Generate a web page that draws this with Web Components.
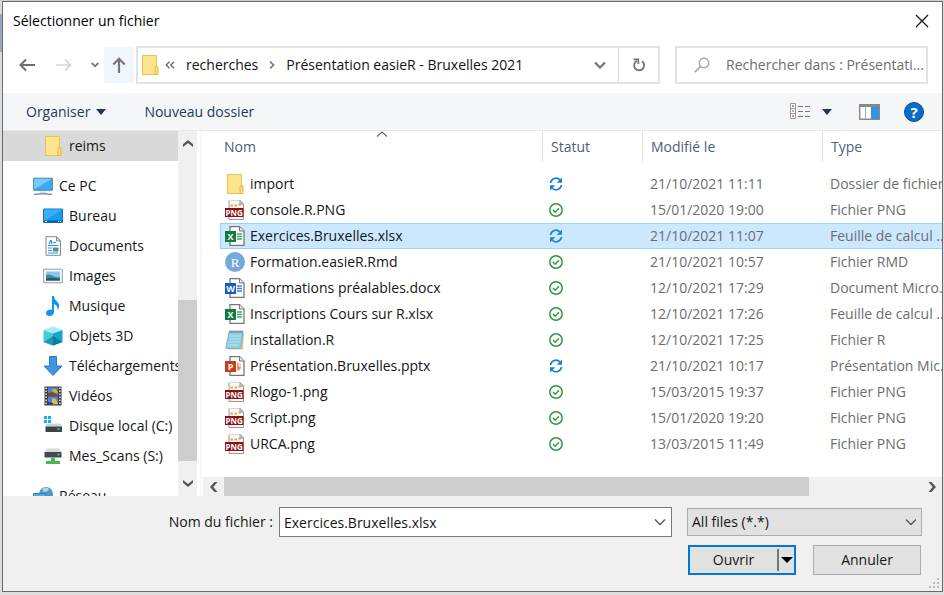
<!DOCTYPE html>
<html lang="fr">
<head>
<meta charset="utf-8">
<title>Sélectionner un fichier</title>
<style>
html, body { margin: 0; height: 100%; }
body {
  box-sizing: border-box;
  padding: 1px 1px 3px 2px;
  background: linear-gradient(#9aa9c0, #9aa9c0) 0 14px / 2px 38px no-repeat, linear-gradient(#cfcfcf, #cfcfcf) 0 0 / 100% 1px no-repeat, #dcdcdc;
  font: 14px/20px "Open Sans", "Noto Sans", sans-serif;
  color: #161616;
}
</style>
</head>
<body>
<file-dialog></file-dialog>
<script>
const ICONS = {
  close: ['0 0 14 14', '<path d="M1 1l12 12M13 1L1 13" stroke="#111" stroke-width="1.2" fill="none"/>'],
  back: ['0 0 16 14', '<path d="M7 1.5L1.5 7 7 12.500M2 7h14" stroke="#6e6e6e" stroke-width="2" fill="none"/>'],
  forward: ['0 0 16 14', '<path d="M9 1.500L14.500 7 9 12.500M14 7H0" stroke="#d6d6d6" stroke-width="1.700" fill="none"/>'],
  up: ['0 0 14 16', '<path d="M1.300 7.500L7 1.800l5.700 5.700M7 2v14" stroke="#777" stroke-width="2.200" fill="none"/>'],
  small: ['0 0 8 6', '<path d="M.7 1L4 4.300 7.300 1" stroke="#777" stroke-width="1.800" fill="none"/>'],
  down: ['0 0 12 8', '<path d="M1 1.500l5 5 5-5" stroke="#777" stroke-width="2.200" fill="none"/>'],
  thin: ['0 0 12 8', '<path d="M1 1.500l5 5 5-5" stroke="#555" stroke-width="1.300" fill="none"/>'],
  sort: ['0 0 12 6', '<path d="M1 5.500l5-4.500 5 4.500" stroke="#666" stroke-width="1.300" fill="none"/>'],
  sup: ['0 0 10 8', '<path d="M0 7V4.200L5 0l5 4.200V7L5 3z" fill="#555"/>'],
  sdown: ['0 0 10 8', '<path d="M0 1v2.800L5 8l5-4.200V1L5 5z" fill="#555"/>'],
  sleft: ['0 0 8 10', '<path d="M7.500 0H4.500L0 5l4.500 5h3L3.300 5z" fill="#555"/>'],
  sright: ['0 0 8 10', '<path d="M.5 0h3L8 5l-4.500 5h-3L4.700 5z" fill="#555"/>'],
  guill: ['0 0 10 8', '<path d="M4.500 .7L1.200 4l3.300 3.300M9 .7L5.700 4 9 7.300" stroke="#666" stroke-width="1.300" fill="none"/>'],
  crumb: ['0 0 6 8', '<path d="M1 .7L4.500 4 1 7.300" stroke="#777" stroke-width="1.600" fill="none"/>'],
  refresh: ['0 0 14 14', '<path d="M9.200 2.900A5 5 0 1 1 4 3.200" stroke="#777" stroke-width="1.900" fill="none" transform="matrix(-1 0 0 1 14 0)"/><path d="M1.500 1.300H6.300V6" stroke="#777" stroke-width="1.800" fill="none"/>'],
  search: ['0 0 16 16', '<circle cx="10" cy="6" r="4.800" stroke="#999" stroke-width="1.200" fill="none"/><path d="M6.500 9.500L.7 15.300" stroke="#999" stroke-width="1.400"/>'],
  tri: ['0 0 10 6', '<path d="M0 0h10L5 6z" fill="#1e395b"/>'],
  btri: ['0 0 12 6', '<path d="M0 0h12L6 6z" fill="#000"/>'],
  views: ['0 0 21 17', '<path d="M.5 .5h5v5h-5zM.5 5.500h5v5h-5zM.5 10.500h5v5h-5z" fill="#fff" stroke="#999"/><path d="M2.300 2.300h1.500v1.500H2.300z" fill="#555"/><path d="M2.300 7.300h1.500v1.500H2.300z" fill="#2b7de0"/><path d="M2.300 12.300h1.500v1.500H2.300z" fill="#d33"/><path d="M8 3.500h5m2 0h5M8 8.500h5m2 0h5M8 13.500h5m2 0h5" stroke="#777"/>'],
  pane: ['0 0 21 16', '<path d="M.7 .7h19.600v14.600H.7z" fill="#fff" stroke="#888" stroke-width="1.400"/><path d="M0 0h21v3H0z" fill="#888"/><path d="M6.500 3v12" stroke="#aaa"/><path d="M12 3h8v12h-8z" fill="#3596e0"/>'],
  help: ['0 0 20 20', '<circle cx="10" cy="10" r="9.500" fill="#0b6bcb" stroke="#084f9c"/><text x="10" y="15.500" text-anchor="middle" font-size="15" font-weight="700" fill="#fff">?</text>'],
  folder: ['0 0 20 20', '<path d="M2.500 .5h14v19h-14z" fill="#ffe48f" stroke="#eac251"/><path d="M15 12.500q0-1 1.500-1t1.500 1v7h-3z" fill="#ffdc75" stroke="#e5b83d"/>'],
  pc: ['0 0 20 20', '<path d="M.7 2.200h18.600v12H.7z" fill="#3aabf5" stroke="#4a7f9e"/><path d="M1.200 2.700h17.600L1.200 13.500z" fill="#76cbff"/><path d="M7.500 15.200h5l1 2h-7z" fill="#d5dde4"/><path d="M1 18.500q9-1.500 18 0" stroke="#7893a8" stroke-width="1.500" fill="none"/>'],
  desktop: ['0 0 20 20', '<path d="M.5 3h19v13.500H.5z" fill="#189cf4" stroke="#1673b3"/><path d="M1 3.500h18L3 14H1z" fill="#3cadff"/><path d="M1 14.500h18v2H1z" fill="#0b5d9b"/><path d="M2 15.500h2m11 0h1m1 0h1" stroke="#fff"/>'],
  docs: ['0 0 20 20', '<path d="M3 .7h10.500L17.500 5v14.300H3z" fill="#fff" stroke="#888"/><path d="M13.500 .7V5h4z" fill="#ddd" stroke="#888"/><path d="M8 4l-2 4M8 4l1 4M10 6.500h3M5 9.500h10.500M5 12h4M5 14.500h4M5 17h10" stroke="#2795e8" stroke-width="1.200" fill="none"/><path d="M10 11.500h5.500v4H10z" fill="#598a8c"/>'],
  images: ['0 0 20 20', '<path d="M.7 3.200h18.600v13.600H.7z" fill="#fafafa" stroke="#999"/><path d="M3 5.500h14v9H3z" fill="#8bc4f1"/><path d="M3 9q4-1 7 1t7 1v3.500H3z" fill="#4a8b7e"/><path d="M3 12.500q7-1 14 .5v1.500H3z" fill="#21567d"/>'],
  music: ['0 0 20 20', '<path d="M9 0h2q0 3 2.500 5t2.700 4.500q0 3-1.700 5 .7-5-3.500-6.500v8q-.4 3.700-4.500 4-3.300 0-3.500-2.700.2-3.300 4-3.700 1.200 0 2 .5z" fill="#0d95f2"/>'],
  cube: ['0 0 20 20', '<path d="M10 .5L19.500 4 10 7.500.5 4z" fill="#a2edf3"/><path d="M.5 4L10 7.500v12L.5 16z" fill="#45cbd7"/><path d="M19.500 4L10 7.500v12l9.500-3.500z" fill="#11a9cd"/><path d="M.5 16L10 10v9.500z" fill="#1b9bae"/><path d="M10 10l9.500 6L10 19.500z" fill="#087aa7"/>'],
  download: ['0 0 20 20', '<path d="M6.500 .5h7V10H19l-9 9.500L1 10h5.500z" fill="#3e95e3" stroke="#2a79c5"/>'],
  video: ['0 0 20 20', '<path d="M1.500 .5h17v19h-17z" fill="#3e3e3e"/><path d="M3.200 1.500v17M16.800 1.500v17" stroke="#ddd" stroke-width="1.600" stroke-dasharray="1.500 1.500"/><path d="M5 1.500h10v8H5zM5 10.500h10v8H5z" fill="#4e83dc"/><path d="M9 3h4l2 4-5 1z" fill="#d8a92e"/><path d="M5 7l5-1 5 3v.5H5z" fill="#7d4a28"/><path d="M9 12l4 1 2 5H9z" fill="#e4bb3c"/><path d="M5 16l5 1v1.500H5z" fill="#263b86"/>'],
  disk: ['0 0 20 20', '<path d="M1 0h3v3H1zM5 0h3v3H5zM1 4h3v3H1zM5 4h3v3H5z" fill="#17afea"/><path d="M4 7.500h13l2 3H2.500z" fill="#cfd3d5"/><path d="M2.500 10.500H19v5.500H2.500z" fill="#3c4245"/><path d="M14.500 13h2" stroke="#45e861" stroke-width="1.600"/>'],
  net: ['0 0 20 20', '<path d="M4 2.500h12l2.500 3.500h-17z" fill="#d7d9da"/><path d="M1.500 6h17v5.500h-17z" fill="#42484b"/><path d="M14.500 8.500h2" stroke="#45e861" stroke-width="1.600"/><path d="M8 12h4v3h5v3H3v-3h5z" fill="#49b851"/>'],
  globe: ['0 0 20 20', '<circle cx="13" cy="8" r="7" fill="#4a9ac5"/><path d="M9 3q4-3 7 0-1 3-5 3z" fill="#a7d9ec"/><path d="M.5 7.500h12v8H.5z" fill="#45b1f0" stroke="#3a7ca5"/>'],
  png: ['0 0 20 20', '<path d="M4 .5h11L18.500 4v15.500H4z" fill="#f7f7ff" stroke="#999"/><path d="M4 .5h11" stroke="#d5d5f5"/><path d="M15 .5V4h3.500z" fill="#ddd" stroke="#999"/><path d="M5.500 5.500h2.500m1.500 0H12m1.500-1H16" stroke="#f5a623" stroke-width="2.200"/><path d="M0 8h18.500v9H0z" fill="#8a1212"/><text x="9.200" y="15.500" text-anchor="middle" font-size="8" font-weight="700" fill="#fff">PNG</text>'],
  r: ['0 0 20 20', '<circle cx="10" cy="10" r="10" fill="#75a9dc"/><text x="10" y="14.500" text-anchor="middle" font-family="Liberation Serif, serif" font-size="13" fill="#fff">R</text>'],
  notes: ['0 0 20 20', '<path d="M5 2.500h14l-1 17H3z" fill="#d9c79b"/><path d="M4 2h14l-2.500 16.500H.7z" fill="#8fcfe2" stroke="#6ba6bb" stroke-width=".7"/><path d="M5 6h11M4.500 9h11M4 12h11M3 15h11" stroke="#b9e3f0"/><path d="M4.500 1.500h14" stroke="#555" stroke-width="2" stroke-dasharray="1 1"/>'],
  sync: ['0 0 14 14', '<path d="M1.500 6A5.500 5.500 0 0 1 11 3M12.500 8A5.500 5.500 0 0 1 3 11" stroke="#1782d8" stroke-width="1.700" fill="none"/><path d="M13 .5v5.300H7.700zM1 13.500V8.200h5.300z" fill="#1782d8"/>'],
  ok: ['0 0 14 14', '<circle cx="7" cy="7" r="6.200" stroke="#2f9a41" stroke-width="1.500" fill="none"/><path d="M4 7l2.200 2.200L10 5.300" stroke="#2f9a41" stroke-width="1.500" fill="none"/>'],
  grip: ['0 0 11 11', '<path d="M8 0h2v2H8zM4 4h2v2H4zM8 4h2v2H8zM0 8h2v2H0zM4 8h2v2H4zM8 8h2v2H8z" fill="#bbb"/>']
};
const office = (color, letter, lines) => ['0 0 20 20',
  `<path d="M5 .7h9.500L19 5v14.300H5z" fill="#fff" stroke="#777" stroke-width="1.300"/><path d="M14.500 .7V5H19" fill="#eee" stroke="#777"/>${lines}<path d="M0 5h11v11H0z" fill="${color}"/><text x="5.500" y="13.700" text-anchor="middle" font-size="9" font-weight="700" fill="#fff">${letter}</text>`];
ICONS.xls = office('#107c41', 'X', '<path d="M12 8h5M12 10.500h5M12 13h5" stroke="#38a969" stroke-width="1.500"/>');
ICONS.doc = office('#185abd', 'W', '<path d="M12 8h5M12 10.500h5M12 13h5" stroke="#3a83dd" stroke-width="1.500"/>');
ICONS.ppt = office('#c43e1c', 'P', '<path d="M12 6.500a4 4 0 1 1 0 8z" fill="#f08a68"/><path d="M14 6v4h3" stroke="#fff" fill="none"/>');

const define = (name, html, setup) => customElements.define(name, class extends HTMLElement {
  constructor() {
    super();
    const t = document.createElement('template');
    t.innerHTML = html;
    this.attachShadow({ mode: 'open' }).append(t.content.cloneNode(true));
  }
  connectedCallback() { if (setup) setup.call(this, this.shadowRoot); }
});
const RESET = 'button,input,select{font:inherit;color:inherit;border:0;background:none;padding:0;margin:0;border-radius:0;outline:0;min-width:0}button{display:flex;align-items:center;justify-content:center}:host,*{box-sizing:border-box}';

define('ui-icon', '<style>:host{display:block;flex:none;font-family:"Open Sans",sans-serif}svg{display:block}</style>', function (root) {
  const [box, body] = ICONS[this.getAttribute('name')];
  const [, , w, h] = box.split(' ');
  const holder = document.createElement('template');
  holder.innerHTML = `<svg width="${w}" height="${h}" viewBox="${box}" aria-hidden="true">${body}</svg>`;
  root.append(holder.content);
});

define('title-bar', `<style>${RESET}
:host{display:flex;justify-content:space-between;align-items:center;height:38px;padding:0 13px 0 10px;color:#000}
button{width:14px;height:14px}</style>
<slot></slot><button aria-label="Fermer"><ui-icon name="close"></ui-icon></button>`);

define('nav-bar', `<style>${RESET}
:host{display:flex;align-items:center;height:53px;padding:6px 14px 9px 9px}
.b{width:30px;height:36px}.c{width:24px;margin-left:4px}.f{margin-left:7px}.up{background:#f0f6fd;margin-left:-3px}
.address,.search{display:flex;align-items:center;height:38px;border:2px solid #e3e3e3}
.address{flex:1;margin-left:2px;padding-left:2px;color:#111}
ol{display:flex;align-items:center;flex:1;margin:0;padding:0;list-style:none}
li{display:flex;align-items:center;white-space:nowrap}
li ui-icon{margin:0 11px 0 11px}li:first-child ui-icon{margin:0 11px 0 5px}
.drop{width:36px;height:34px}.refresh{width:40px;height:34px;border-left:1px solid #d9d9d9}
.search{width:253px;margin-left:15px;padding:0 0 0 17px}
.search input{flex:1;margin-left:16px;color:#6d6d6d;text-overflow:ellipsis}.search input::placeholder{color:#6d6d6d;opacity:1}
</style>
<button class="b" aria-label="Précédent"><ui-icon name="back"></ui-icon></button>
<button class="b f" aria-label="Suivant"><ui-icon name="forward"></ui-icon></button>
<button class="c" aria-label="Récents"><ui-icon name="small"></ui-icon></button>
<button class="b up" aria-label="Dossier parent"><ui-icon name="up"></ui-icon></button>
<div class="address"><ui-icon name="folder"></ui-icon>
<ol><li><ui-icon name="guill"></ui-icon>recherches</li><li><ui-icon name="crumb"></ui-icon>Présentation easieR - Bruxelles 2021</li></ol>
<button class="drop" aria-label="Emplacements"><ui-icon name="down"></ui-icon></button>
<button class="refresh" aria-label="Actualiser"><ui-icon name="refresh"></ui-icon></button></div>
<label class="search"><ui-icon name="search"></ui-icon><input aria-label="Rechercher" placeholder="Rechercher dans : Présentati..."></label>`);

define('command-bar', `<style>${RESET}
:host{display:flex;align-items:center;height:38px;padding:0 18px 0 23px;background:#f4f6f8;border-bottom:1px solid #e6e8ea;color:#1e395b}
button{gap:6px}.new{margin-left:38px}.views{margin-left:auto;gap:11px}.pane{margin:0 24px 0 27px}
</style>
<button>Organiser <ui-icon name="tri"></ui-icon></button><button class="new">Nouveau dossier</button>
<button class="views" aria-label="Affichage"><ui-icon name="views"></ui-icon><ui-icon name="tri"></ui-icon></button>
<button class="pane" aria-label="Volet de visualisation"><ui-icon name="pane"></ui-icon></button>
<button aria-label="Aide"><ui-icon name="help"></ui-icon></button>`);

define('scroll-bar', `<style>${RESET}
:host{display:flex;flex-direction:column;width:19px;background:#f0f0f0;flex:none}
:host([horizontal]){flex-direction:row;width:auto;height:19px}
button{width:19px;height:26px;flex:none}:host([horizontal]) button{width:21px;height:19px}
.track{flex:1;display:flex;flex-direction:inherit}.before{flex:var(--before)}.thumb{flex:var(--size);background:#cdcdcd}.after{flex:var(--after)}
</style><button class="s" aria-label="Défiler en arrière"></button><div class="track"><div class="before"></div><div class="thumb"></div><div class="after"></div></div><button class="e" aria-label="Défiler en avant"></button>`, function (root) {
  const h = this.hasAttribute('horizontal');
  root.querySelector('.s').innerHTML = `<ui-icon name="${h ? 'sleft' : 'sup'}"></ui-icon>`;
  root.querySelector('.e').innerHTML = `<ui-icon name="${h ? 'sright' : 'sdown'}"></ui-icon>`;
});

define('tree-item', `<style>${RESET}
:host{display:flex;align-items:center;gap:6px;height:30px;flex:none;padding-left:40px;white-space:nowrap;overflow:hidden}
:host([root]){margin-top:10px;padding-left:30px}:host([selected]){background:#d9d9d9}</style><slot name="icon"></slot><slot></slot>`);

define('nav-tree', `<style>${RESET}
:host{display:flex;width:199px;flex:none;min-height:0;border-right:2px solid #f7f7f7;padding-right:3px}
nav{flex:1;min-width:0;overflow:hidden;display:flex;flex-direction:column}
scroll-bar{--before:143;--size:161;--after:9}</style><nav aria-label="Dossiers"></nav><scroll-bar></scroll-bar>`, function (root) {
  root.querySelector('nav').innerHTML = [
    ['folder', 'reims', 'selected'], ['pc', 'Ce PC', 'root'], ['desktop', 'Bureau'], ['docs', 'Documents'], ['images', 'Images'],
    ['music', 'Musique'], ['cube', 'Objets 3D'], ['download', 'Téléchargements'], ['video', 'Vidéos'], ['disk', 'Disque local (C:)'],
    ['net', 'Mes_Scans (S:)'], ['globe', 'Réseau', 'root']
  ].map(([i, t, a = '']) => `<tree-item ${a}><ui-icon slot="icon" name="${i}"></ui-icon>${t}</tree-item>`).join('');
});

define('file-list', `<style>${RESET}
:host{display:flex;flex-direction:column;flex:1;min-width:0}
.view{flex:1;overflow:hidden;padding-left:18px;min-height:0}
table{width:100%;table-layout:fixed;border-collapse:separate;border-spacing:0;color:#6d6d6d}
th{position:relative;height:32px;text-align:left;font-weight:400;color:#4c607a;padding:0 0 0 8px;border-left:1px solid #e3e3e3}
th:first-child{padding-left:3px;border-color:transparent}
th ui-icon{position:absolute;top:0;left:50%;margin-left:-6px}
.n{width:322px}.s{width:100px}.m{width:180px}
td{height:26px;padding:0 0 0 8px;white-space:nowrap;overflow:hidden;border:solid transparent;border-width:1px 0}
.gap td{height:8px;border:0}
td:first-child{padding-left:4px;border-left-width:1px;color:#161616}
td div{display:flex;align-items:center;gap:5px;height:24px}
td:nth-child(2){padding-left:7px}
tr.on td{background:#cce8ff;border-color:#99d1ff}
scroll-bar{margin-left:1px;--before:0;--size:585;--after:112}
</style><div class="view"><table><thead><tr><th class="n">Nom<ui-icon name="sort"></ui-icon></th><th class="s">Statut</th><th class="m">Modifié le</th><th>Type</th></tr></thead>
<tbody></tbody></table></div><scroll-bar horizontal></scroll-bar>`, function (root) {
  root.querySelector('tbody').innerHTML = '<tr class="gap" aria-hidden="true"><td colspan="4"></td></tr>' + [
    ['folder', 'import', 'sync', '21/10/2021 11:11', 'Dossier de fichiers'],
    ['png', 'console.R.PNG', 'ok', '15/01/2020 19:00', 'Fichier PNG'],
    ['xls', 'Exercices.Bruxelles.xlsx', 'sync', '21/10/2021 11:07', 'Feuille de calcul ...'],
    ['r', 'Formation.easieR.Rmd', 'ok', '21/10/2021 10:57', 'Fichier RMD'],
    ['doc', 'Informations préalables.docx', 'ok', '12/10/2021 17:29', 'Document Micro...'],
    ['xls', 'Inscriptions Cours sur R.xlsx', 'ok', '12/10/2021 17:26', 'Feuille de calcul ...'],
    ['notes', 'installation.R', 'ok', '12/10/2021 17:25', 'Fichier R'],
    ['ppt', 'Présentation.Bruxelles.pptx', 'sync', '21/10/2021 10:17', 'Présentation Mic...'],
    ['png', 'Rlogo-1.png', 'ok', '15/03/2015 19:37', 'Fichier PNG'],
    ['png', 'Script.png', 'ok', '15/01/2020 19:20', 'Fichier PNG'],
    ['png', 'URCA.png', 'ok', '13/03/2015 11:49', 'Fichier PNG']
  ].map(([i, n, s, d, t], k) => `<tr${k === 2 ? ' class="on"' : ''}><td><div><ui-icon name="${i}"></ui-icon>${n}</div></td><td><div><ui-icon name="${s}"></ui-icon></div></td><td>${d}</td><td>${t}</td></tr>`).join('');
});

define('dialog-footer', `<style>${RESET}
:host{position:relative;display:flex;flex-direction:column;gap:8px;padding:11px 20px 16px 0;background:#f0f0f0}
.row{display:flex;align-items:center;height:30px}.end{justify-content:flex-end;gap:17px;padding-right:1px}
label{width:270px;text-align:right;margin-right:6px;white-space:nowrap}
.combo{display:flex;flex:1;height:30px;border:1px solid #7a7a7a;background:#fff;min-width:0}
.combo input{flex:1;padding:2px 0 0 4px}.combo button{width:22px}
.filter{display:grid;width:235px;height:28px;margin-left:15px}
.filter select{grid-area:1/1;appearance:none;border:1px solid #adadad;background:#e1e1e1;padding-left:4px}
.filter ui-icon{grid-area:1/1;justify-self:end;align-self:center;margin-right:5px;pointer-events:none}
.split{display:flex;width:108px;height:30px;border:2px solid #0078d7;background:#e1e1e1}
.split button:first-child{flex:1}.split button:last-child{width:17px;margin:2px 0;border-left:2px solid #777}
.cancel{width:108px;height:30px;border:1px solid #adadad;background:#e1e1e1}
.grip{position:absolute;right:2px;bottom:2px}
</style>
<div class="row"><label for="name">Nom du fichier :</label><div class="combo"><input id="name" value="Exercices.Bruxelles.xlsx"><button aria-label="Fichiers récents"><ui-icon name="thin"></ui-icon></button></div>
<div class="filter"><select aria-label="Type de fichier"><option>All files (*.*)</option></select><ui-icon name="thin"></ui-icon></div></div>
<div class="row end"><div class="split"><button>Ouvrir</button><button aria-label="Options d’ouverture"><ui-icon name="btri"></ui-icon></button></div><button class="cancel">Annuler</button></div>
<ui-icon class="grip" name="grip"></ui-icon>`);

define('file-dialog', `<style>
:host{display:flex;flex-direction:column;box-sizing:border-box;height:100%;border:1px solid #6a6a6a;background:#fff;overflow:hidden}
main{display:flex;flex:1;min-height:0}</style>
<title-bar>Sélectionner un fichier</title-bar><nav-bar></nav-bar><command-bar></command-bar>
<main><nav-tree></nav-tree><file-list></file-list></main><dialog-footer></dialog-footer>`);
</script>
</body>
</html>
